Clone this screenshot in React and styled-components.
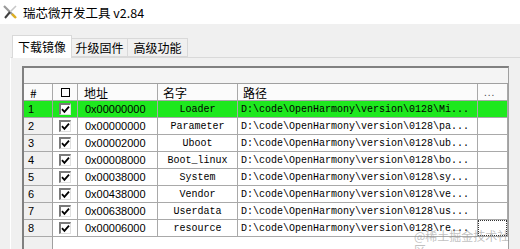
import React from 'react';
import styled, { createGlobalStyle } from 'styled-components';

const Global = createGlobalStyle`
    html, body { margin:0; padding:0; background:#f0f0f0; }
    #root { width:520px; height:249px; overflow:hidden; position:relative; }
`;

const Window = styled.div`
    width:520px; height:249px; overflow:hidden; position:relative;
    font-family:"Noto Sans CJK SC", "Liberation Sans", sans-serif;
    color:#000;
`;

const TitleBar = styled.div`
    height:24px; background:#fff;
    display:flex; align-items:center; gap:5px; padding-left:2px;
    font-size:12.5px;
`;

const Body = styled.div`
    padding-top:11px;
`;

const TabRow = styled.div`
    display:flex; align-items:flex-end; height:22px;
    padding-left:12px;
    position:relative; z-index:1;
`;

const Tab = styled.div`
    box-sizing:border-box;
    width:${p => p.$w}px;
    height:${p => p.$active ? 23 : 19}px;
    margin-bottom:${p => p.$active ? -1 : 0}px;
    background:${p => p.$active ? '#fff' : '#f0f0f0'};
    border:1px solid #d9d9d9;
    border-bottom:${p => p.$active ? 'none' : '1px solid #d9d9d9'};
    border-left:${p => p.$first ? '1px solid #d9d9d9' : 'none'};
    font-size:12px; line-height:${p => p.$active ? 21 : 17}px;
    text-align:center;
`;

const Panel = styled.div`
    margin-left:10px;
    border-top:1px solid #d9d9d9;
    border-left:1px solid #fff;
    padding:8px 0 0 11px;
    height:200px;
`;

const Frame = styled.div`
    width:487px; box-sizing:border-box;
    border-top:2px solid #808080;
    border-left:2px solid #808080;
    border-right:1px solid #a0a0a0;
    background:#fff;
    height:190px;
    position:relative;
`;

const Strip = styled.div`
    height:16px; box-sizing:border-box;
    background:#f4f4f4;
    border-bottom:1px solid #a0a0a0;
`;

const Row = styled.div`
    display:grid;
    grid-template-columns:29px 25px 80px 80px 240px 30px;
    height:17px;
    background:${p => p.$selected ? '#1ee81e' : '#fff'};
`;

const Cell = styled.div`
    box-sizing:border-box;
    border-right:1px solid #a9a9a9;
    border-bottom:1px solid #a9a9a9;
    display:flex; align-items:center;
    justify-content:${p => p.$center ? 'center' : 'flex-start'};
    padding-left:${p => p.$pad || 0}px;
    overflow:hidden; white-space:nowrap;
    position:relative;
`;

const HeadCell = styled(Cell)`
    font-size:12px;
    background:#fbfbfb;
`;

const NumCell = styled(Cell)`
    background:${p => p.$selected ? 'transparent' : '#f0f0f0'};
    font-family:"Liberation Sans", sans-serif;
    font-size:11px;
    border-right:1px solid #a0a0a0;
`;

const AddrCell = styled(Cell)`
    font-family:"Liberation Sans", sans-serif;
    font-size:11px;
`;

const MonoCell = styled(Cell)`
    font-family:"Liberation Mono", monospace;
    font-size:10px;
`;

const FocusCell = styled(Cell)`
    &::after {
        content:""; position:absolute; inset:0 0 0 0;
        border:1px dotted #333;
    }
`;

const HeadBox = styled.span`
    width:9px; height:9px; box-sizing:border-box;
    border:1px solid #000; display:block;
`;

const Check = styled.span`
    width:12px; height:12px; box-sizing:border-box;
    border-top:2px solid #7a7a7a; border-left:2px solid #7a7a7a;
    border-right:1px solid #e0e0e0; border-bottom:1px solid #e0e0e0;
    background:#fff; display:flex; align-items:center; justify-content:center;
`;

const Dots = styled.span`
    font-family:"Liberation Sans", sans-serif;
    font-size:10px; color:#444; letter-spacing:1px;
`;

const Filler = styled.div`
    display:grid;
    grid-template-columns:29px 1fr;
    height:30px;
`;

const FillNum = styled.div`
    background:#f0f0f0;
    border-right:1px solid #a0a0a0;
`;

const Watermark = styled.div`
    position:absolute; left:414px; top:229px;
    font-size:12px; line-height:14px; color:rgba(140,140,140,0.55);
    font-family:"Noto Sans CJK SC", sans-serif;
    pointer-events:none;
`;

const AppIcon = () => (
    <svg width="16" height="16" viewBox="0 0 16 16">
        <line x1="2" y1="2" x2="13" y2="13" stroke="#9a9a9a" strokeWidth="2.2" />
        <line x1="14" y1="2" x2="8" y2="8" stroke="#c8c8c8" strokeWidth="1.6" />
        <line x1="8" y1="8" x2="3" y2="14" stroke="#404040" strokeWidth="2" />
        <line x1="10" y1="10" x2="14" y2="14" stroke="#e0b020" strokeWidth="2.4" />
    </svg>
);

const Tick = () => (
    <svg width="9" height="9" viewBox="0 0 9 9">
        <path d="M1 4.2 L3.4 6.8 L8 1.6" fill="none" stroke="#000" strokeWidth="1.8" />
    </svg>
);

const rows = [
    ['0x00000000', 'Loader', 'Mi'],
    ['0x00000000', 'Parameter', 'pa'],
    ['0x00002000', 'Uboot', 'ub'],
    ['0x00008000', 'Boot_linux', 'bo'],
    ['0x00038000', 'System', 'sy'],
    ['0x00438000', 'Vendor', 've'],
    ['0x00638000', 'Userdata', 'us'],
    ['0x00006000', 'resource', 're'],
];

const App = () => {
    return (
        <Window>
            <Global />
            <TitleBar>
                <AppIcon />
                <span>瑞芯微开发工具 v2.84</span>
            </TitleBar>
            <Body>
                <TabRow>
                    <Tab $w={60} $active $first>下载镜像</Tab>
                    <Tab $w={56}>升级固件</Tab>
                    <Tab $w={60}>高级功能</Tab>
                </TabRow>
                <Panel>
                    <Frame>
                        <Strip />
                        <Row>
                            <HeadCell $pad={6}>#</HeadCell>
                            <HeadCell $pad={8}><HeadBox /></HeadCell>
                            <HeadCell $pad={6}>地址</HeadCell>
                            <HeadCell $pad={5}>名字</HeadCell>
                            <HeadCell $pad={5}>路径</HeadCell>
                            <HeadCell $pad={6}><Dots>...</Dots></HeadCell>
                        </Row>
                        {rows.map(([addr, name, tail], i) => {
                            const sel = i === 0;
                            const last = i === rows.length - 1;
                            return (
                                <Row key={i} $selected={sel}>
                                    <NumCell $pad={4} $selected={sel}>{i + 1}</NumCell>
                                    <Cell $pad={6}><Check><Tick /></Check></Cell>
                                    <AddrCell $pad={7}>{addr}</AddrCell>
                                    <MonoCell $center>{name}</MonoCell>
                                    <MonoCell $pad={3}>{`D:\\code\\OpenHarmony\\version\\0128\\${tail}...`}</MonoCell>
                                    {last ? <FocusCell /> : <Cell />}
                                </Row>
                            );
                        })}
                        <Filler>
                            <FillNum />
                            <div />
                        </Filler>
                    </Frame>
                </Panel>
            </Body>
            <Watermark>@稀土掘金技术社区</Watermark>
        </Window>
    );
};

export default App;
